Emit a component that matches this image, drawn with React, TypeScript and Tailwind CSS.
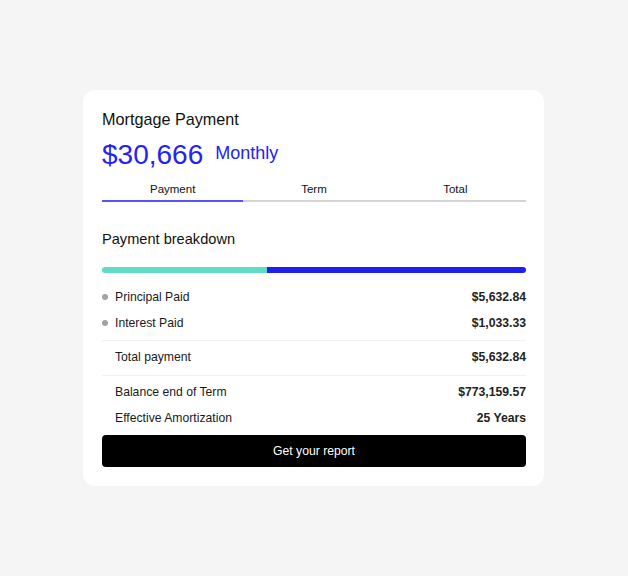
import React from "react";

const font = { fontFamily: '"Liberation Sans", Arial, sans-serif' };

function Row({ label, value, dot }: { label: string; value: string; dot?: boolean }) {
  return (
    <div className="flex h-[26px] items-center justify-between text-[#1a1a1a]">
      <div className="flex items-center text-[12.2px]">
        <span className={"mr-[7px] h-[6px] w-[6px] rounded-full " + (dot ? "bg-[#a3a3a3]" : "bg-transparent")} />
        <span>{label}</span>
      </div>
      <span className="text-[12.2px] font-bold text-[#222]">{value}</span>
    </div>
  );
}

export default function App() {
  return (
    <div className="flex min-h-screen items-center justify-center bg-[#f5f5f5]" style={font}>
      <div className="mr-[1px] w-[461px] rounded-[12px] bg-white pb-[19px] pl-[19px] pr-[18px] pt-[18px]">
        <div className="text-[16.2px] leading-[22px] text-[#111]">Mortgage Payment</div>
        <div className="mt-[9px] flex h-[32px] items-baseline leading-[32px] text-[#2323f2]">
          <span className="text-[28px]">$30,666</span>
          <span className="relative top-[-5px] ml-[12px] text-[18px]">Monthly</span>
        </div>
        <div className="mt-[10px] grid grid-cols-3 text-[11.5px] leading-[16px] text-[#111]">
          <div className="border-b-2 border-[#5656ee] pb-[3px] text-center">Payment</div>
          <div className="border-b-2 border-[#d4d4d4] pb-[3px] text-center">Term</div>
          <div className="border-b-2 border-[#d4d4d4] pb-[3px] text-center">Total</div>
        </div>
        <div className="mt-[26px] text-[14.6px] leading-[22px] text-[#111]">Payment breakdown</div>
        <div className="mt-[17px] flex h-[6px] overflow-hidden rounded-full">
          <div className="h-full w-[38.8%] bg-[#5edcc6]" />
          <div className="h-full flex-1 bg-[#1f1ff0]" />
        </div>
        <div className="mt-[11px]">
          <Row label="Principal Paid" value="$5,632.84" dot />
          <Row label="Interest Paid" value="$1,033.33" dot />
        </div>
        <div className="mt-[4px] h-px bg-[#f0f0f0]" />
        <div className="mt-[3px]">
          <Row label="Total payment" value="$5,632.84" />
        </div>
        <div className="mt-[5px] h-px bg-[#f0f0f0]" />
        <div className="mt-[3px]">
          <Row label="Balance end of Term" value="$773,159.57" />
          <Row label="Effective Amortization" value="25 Years" />
        </div>
        <button className="mt-[4px] flex h-[32px] w-full items-center justify-center rounded-[4px] bg-black text-[12.2px] text-white">
          Get your report
        </button>
      </div>
    </div>
  );
}
